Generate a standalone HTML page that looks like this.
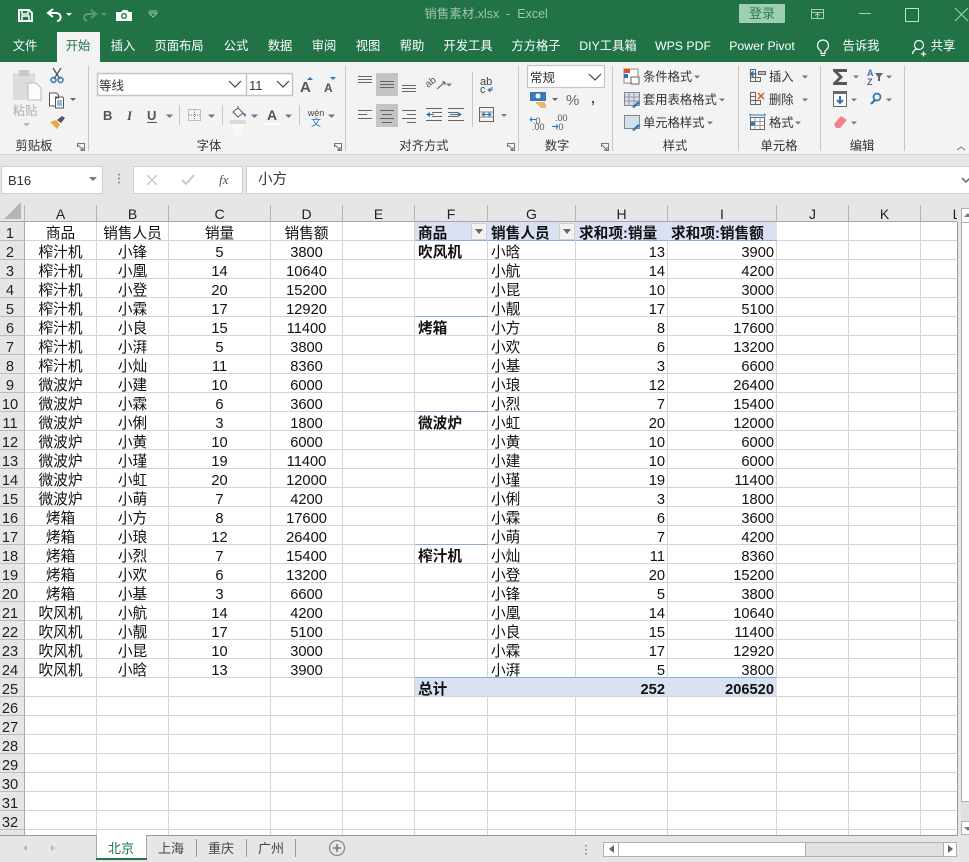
<!DOCTYPE html>
<html lang="zh"><head><meta charset="utf-8"><title>销售素材.xlsx - Excel</title>
<style>
html,body{margin:0;padding:0;width:969px;height:862px;overflow:hidden;background:#e6e6e6;font-family:"Liberation Sans","Noto Sans CJK SC",sans-serif}
svg{position:absolute;left:0;top:0}
svg text{font-family:"Liberation Sans","Noto Sans CJK SC",sans-serif}
#grid{position:absolute;left:0;top:205px;width:957px;height:630px;overflow:hidden;background:#fff}
table{border-collapse:separate;border-spacing:0;table-layout:fixed;width:993px;font-size:14.67px;color:#111}
td,th{box-sizing:border-box;height:19px;padding:6px 0 0 0;border-right:1px solid #d4d4d4;border-bottom:1px solid #d4d4d4;text-align:center;font-weight:400;white-space:nowrap;overflow:hidden;line-height:12px}
tr.h td{height:17px;padding-top:2px;padding-right:0;background:#e6e6e6;border-right:1px solid #b4b4b4;border-bottom:1px solid #a6a6a6;color:#222;font-size:14px;line-height:14px}
td:first-child{background:#e6e6e6;border-right:1px solid #a8a8a8;border-bottom:1px solid #bbb;color:#222;font-size:14.67px;padding-right:4px}
td.l{text-align:left;padding-left:3px}
td.b{font-weight:700;text-align:left;padding-left:3px}
td.r{text-align:right;padding-right:2px}
tr.ph td.p{background:#d9e1f2;border-right-color:#d9e1f2;border-bottom:1px solid #8ea9db;font-weight:700;text-align:left;padding-left:3px;color:#111;position:relative}
tr.t td.p{background:#d9e1f2;border-right-color:#d9e1f2;border-bottom-color:#d4d4d4;font-weight:700}
td.tb{border-bottom-color:#8ea9db}
td.gb{border-bottom-color:#8ea9db}
.f{position:absolute;right:0;top:1px;width:16px;height:17px;background:#f2f2f2;border:1px solid #d0d0d0;box-sizing:border-box}
.f:after{content:"";position:absolute;left:3px;top:5px;border:4px solid transparent;border-top:5px solid #666;border-bottom:0}
</style></head><body>
<svg width="969" height="205" viewBox="0 0 969 205">
<rect width="969" height="62" fill="#217346"/>
<rect y="62" width="969" height="93" fill="#f3f3f3"/>
<rect y="154" width="969" height="1" fill="#d2d2d2"/>
<rect y="155" width="969" height="50" fill="#e6e6e6"/>

<!-- QAT -->
<g fill="none" stroke="#fff" stroke-width="2"><path d="M19 10h10l3 3v8H19z"/><path d="M22 10v4h6v-4M22 21v-5h7v5" stroke-width="1.5"/></g>
<path d="M53 9l-5 4 5 4M48 13h8c6 0 6 8 1 8" fill="none" stroke="#fff" stroke-width="2"/>
<path d="M66 13h6l-3 3z" fill="#fff"/>
<path d="M91 10l5 4-5 4M96 14h-8c-5 0-5 6-1 7" fill="none" stroke="#5a9a77" stroke-width="2"/>
<path d="M101 13h6l-3 3z" fill="#5a9a77"/>
<path d="M116 12h5l2-2h4l2 2h3v9h-16z" fill="#fff"/><circle cx="124" cy="16" r="3" fill="#217346"/><circle cx="124" cy="16" r="1.6" fill="#fff"/>
<path d="M149 11h8M149 13h8l-4 4z" fill="none" stroke="#9cc4ad" stroke-width="1"/>
<text x="486" y="18" font-size="12.5" fill="#9fc5b0" text-anchor="middle">销售素材.xlsx&#160;&#160;-&#160;&#160;Excel</text>
<rect x="739" y="4" width="46" height="19" rx="1" fill="#9fcfb2"/>
<text x="762" y="18" font-size="13" fill="#2f7c52" text-anchor="middle">登录</text>
<g fill="none" stroke="#a9cdb8"><rect x="811.5" y="9.5" width="12" height="9"/><path d="M811 12.5h13M817.5 18v-4M815 15.5l2.5-2 2.5 2"/>
<path d="M859 13.5h12"/><rect x="905.5" y="8.5" width="13" height="13" stroke="#c3dccd"/><path d="M955 8l13 13M968 8l-13 13"/></g>

<!-- tabs -->
<rect x="57" y="32" width="43" height="30" fill="#f3f3f3"/>
<g font-size="12.3" fill="#fff" text-anchor="middle">
<text x="25" y="50">文件</text>
<text x="78" y="50" fill="#217346">开始</text>
<text x="123" y="50">插入</text>
<text x="179" y="50">页面布局</text>
<text x="236" y="50">公式</text>
<text x="280" y="50">数据</text>
<text x="324" y="50">审阅</text>
<text x="368" y="50">视图</text>
<text x="412" y="50">帮助</text>
<text x="468" y="50">开发工具</text>
<text x="536" y="50">方方格子</text>
<text x="608" y="50">DIY工具箱</text>
<text x="683" y="50">WPS PDF</text>
<text x="762" y="50">Power Pivot</text>
<text x="861" y="50">告诉我</text>
<text x="943" y="50">共享</text>
</g>
<path d="M821 51v2.5h4V51c3-2 3.500-3.500 3.500-5.500a5.500 5.500 0 0 0-11 0c0 2 .5 3.500 3.500 5.500z" fill="none" stroke="#fff" stroke-width="1.200"/><path d="M821 55.500h4" stroke="#fff"/>
<circle cx="919" cy="45" r="4.500" fill="none" stroke="#fff" stroke-width="1.200"/><path d="M912.500 54c.5-3.500 3-5 5-5M921 54h5M923.500 51.500v5" fill="none" stroke="#fff" stroke-width="1.200"/>

<!-- separators -->
<g fill="#c6c6c6"><rect x="88" y="66" width="1" height="85"/><rect x="345" y="66" width="1" height="85"/><rect x="518" y="66" width="1" height="85"/><rect x="612" y="66" width="1" height="85"/><rect x="738" y="66" width="1" height="85"/><rect x="820" y="66" width="1" height="85"/><rect x="904" y="66" width="1" height="85"/>
<rect x="179" y="105" width="1" height="20"/><rect x="222" y="105" width="1" height="20"/><rect x="299" y="105" width="1" height="20"/><rect x="472" y="72" width="1" height="55"/></g>

<!-- clipboard -->
<rect x="13" y="73" width="22" height="27" fill="#dcdcdc"/><rect x="19" y="70" width="10" height="6" fill="#c8c8c8"/>
<path d="M28 83h8l5 5v12H28z" fill="#fbfbfb" stroke="#bbb"/>
<text x="25" y="115" font-size="12.500" fill="#b0b0b0" text-anchor="middle">粘贴</text>
<path d="M23 123h7l-3.500 3.500z" fill="#b8b8b8"/>
<path d="M53 68l7 11M61 68l-7 11" stroke="#555" stroke-width="1.300" fill="none"/><circle cx="53.500" cy="80" r="2.500" fill="none" stroke="#2e75b5" stroke-width="1.500"/><circle cx="60.500" cy="80" r="2.500" fill="none" stroke="#2e75b5" stroke-width="1.500"/>
<path d="M49.500 93h7l2 2v3h-3v8h-6zM55.500 97h7l1 1v10h-8z" fill="#fff" stroke="#555" stroke-width="1"/><path d="M57 101h5M57 103h5M57 105h5" stroke="#2e75b5"/>
<path d="M70 98h6l-3 3z" fill="#666"/>
<path d="M50 122l6-2 4 5-3 4z" fill="#e8a948"/><path d="M57 120l5-4 3 2-4 5z" fill="#555"/>
<g font-size="12.300" fill="#333" text-anchor="middle"><text x="34" y="150">剪贴板</text><text x="209" y="150">字体</text><text x="424" y="150">对齐方式</text><text x="557" y="150">数字</text><text x="675" y="150">样式</text><text x="779" y="150">单元格</text><text x="862" y="150">编辑</text></g>
<g fill="none" stroke="#777"><path d="M77.500 147v-3.500h7v7H81M78 145l5 5M83 147v3h-3"/><path d="M334.500 147v-3.500h7v7H338M335 145l5 5M340 147v3h-3"/><path d="M507.500 147v-3.500h7v7H511M508 145l5 5M513 147v3h-3"/><path d="M601.500 147v-3.500h7v7H605M602 145l5 5M607 147v3h-3"/></g>

<!-- font -->
<rect x="97.500" y="73.500" width="195" height="22" fill="#fff" stroke="#c4c4c4" stroke-width="1.500"/><path d="M246.500 74v21" stroke="#c4c4c4" stroke-width="1.500"/>
<text x="99" y="90" font-size="12.500" fill="#333">等线</text><text x="249" y="90" font-size="13" fill="#333">11</text>
<path d="M229 81l6 6 6-6M277 81l6 6 6-6" fill="none" stroke="#444" stroke-width="1.200"/>
<text x="300" y="92" font-size="15" font-weight="700" fill="#555">A</text><path d="M307 80h6l-3-3z" fill="#2e75b5"/>
<text x="324" y="92" font-size="12" font-weight="700" fill="#555">A</text><path d="M330 77h6l-3 3z" fill="#2e75b5"/>
<text x="103" y="120" font-size="13" font-weight="700" fill="#555">B</text>
<text x="127" y="120" font-size="13" font-weight="700" font-style="italic" fill="#555" style="font-family:'Liberation Serif'">I</text>
<text x="147" y="120" font-size="13" font-weight="700" fill="#555">U</text><path d="M147 122.500h10" stroke="#555"/>
<path d="M166 114.500h7l-3.500 3.500zM208 114.500h7l-3.500 3.500zM251 114.500h7l-3.500 3.500zM285 114.500h7l-3.500 3.500zM328 114.500h7l-3.500 3.500z" fill="#777"/>
<rect x="188.500" y="109.500" width="12" height="11" fill="none" stroke="#888" stroke-dasharray="1 1"/><path d="M194.500 110v10M189 115h11" stroke="#888" stroke-dasharray="1 1"/>
<path d="M233 112l5-4 5 5-5 4zM238 108v-2" fill="#fff" stroke="#555"/><path d="M243 113c2 0 3 1 3 2s-1 2-2 1z" fill="#2e75b5"/>
<rect x="230" y="120" width="16" height="4" fill="#d8dbd8"/><path d="M232 124h12l-4 12h-4z" fill="#f9f9f9"/>
<text x="267" y="120" font-size="14" font-weight="700" fill="#555">A</text><rect x="265" y="123" width="14" height="2" fill="#fff"/>
<text x="316" y="116" font-size="9" fill="#444" text-anchor="middle">wén</text><text x="316" y="126" font-size="10" fill="#2e75b5" text-anchor="middle">文</text>

<!-- alignment -->
<rect x="376" y="73" width="22" height="23" fill="#c4c4c4"/><rect x="376" y="104" width="22" height="23" fill="#c4c4c4"/>
<g stroke="#666" fill="none"><path d="M358 76.500h14M358 79.500h14M358 82.500h14"/><path d="M380 81.500h14M380 84.500h14M380 87.500h14"/><path d="M402 85.500h14M402 88.500h14M402 91.500h14"/>
<path d="M358 110.500h14M358 114.500h9M358 118.500h14"/><path d="M380 110.500h14M382 114.500h10M380 118.500h14M382 122.500h10"/><path d="M402 110.500h14M407 114.500h9M402 118.500h14M407 122.500h9"/>
<path d="M426 108.500h16M432 112.500h10M432 116.500h10M426 120.500h16"/><path d="M448 108.500h16M448 112.500h10M448 116.500h10M448 120.500h16"/></g>
<path d="M426 114.500l4-2.500v5zM430 114h4v1h-4z" fill="#2e75b5"/><path d="M462 114.500l-4-2.500v5zM450 114h8v1h-8z" fill="#2e75b5"/>
<text x="0" y="0" font-size="10" fill="#555" transform="translate(428 88) rotate(-38)">ab</text><path d="M437 89l8-7M445 82h-3M445 82v3" fill="none" stroke="#555"/>
<path d="M446 83.500h6l-3 3z" fill="#777"/>
<text x="480" y="85" font-size="11" fill="#444">ab</text><text x="480" y="93" font-size="11" fill="#444">c</text><path d="M488 90h4v-3M488 90l2-1.500v3z" stroke="#2e75b5" fill="none"/>
<rect x="479.500" y="107.500" width="14" height="14" fill="none" stroke="#666"/><path d="M480 112h13M480 117h13" stroke="#888"/><path d="M482 114.500h9M482 114.500l2-1.500v3zM491 114.500l-2-1.500v3z" stroke="#2e75b5" fill="#2e75b5"/>
<path d="M501 114h6l-3 3z" fill="#777"/>

<!-- number -->
<rect x="527.500" y="65.500" width="77" height="22" fill="#fff" stroke="#c4c4c4" stroke-width="1.200"/>
<text x="530" y="82" font-size="12.500" fill="#333">常规</text><path d="M589 74l6 6 6-6" fill="none" stroke="#444" stroke-width="1.200"/>
<rect x="530" y="92" width="16" height="9" fill="#3a78b8"/><circle cx="538" cy="96" r="2.500" fill="#fff"/><path d="M536 103h9M538 105h8M540 107h6" stroke="#e6a53a" stroke-width="1.500"/>
<path d="M552 98h6l-3 3z" fill="#666"/>
<text x="566" y="105" font-size="15" fill="#666">%</text><text x="591" y="103" font-size="14" font-weight="700" fill="#555">,</text>
<text x="533" y="124" font-size="9" fill="#555">.0</text><text x="532" y="130" font-size="9" fill="#555">.00</text><path d="M530 119.500h6M530 119.500l2-2M530 119.500l2 2" stroke="#2e75b5" fill="none"/>
<text x="555" y="121" font-size="9" fill="#555">.00</text><text x="556" y="130" font-size="9" fill="#555">.0</text><path d="M552 126.500h6M558 126.500l-2-2M558 126.500l-2 2" stroke="#2e75b5" fill="none"/>

<!-- styles -->
<g font-size="12.300" fill="#333"><text x="643" y="81">条件格式</text><text x="643" y="104">套用表格格式</text><text x="643" y="127">单元格样式</text>
<text x="769" y="81">插入</text><text x="769" y="104">删除</text><text x="769" y="127">格式</text></g>
<path d="M694 75.500h6l-3 3zM719 98.500h6l-3 3zM707 121.500h6l-3 3zM802 75.500h6l-3 3zM802 98.500h6l-3 3zM795 121.500h6l-3 3zM853 75.500h6l-3 3zM886 75.500h6l-3 3zM851 98.500h6l-3 3zM886 98.500h6l-3 3zM851 121.500h6l-3 3z" fill="#777"/>
<rect x="624" y="69" width="14" height="14" fill="#fff" stroke="#888"/><rect x="624" y="69" width="6" height="4" fill="#d9542b"/><rect x="624" y="74" width="4" height="4" fill="#2e75b5"/><rect x="631" y="77" width="8" height="7" fill="#fff" stroke="#666"/>
<rect x="624.500" y="92.500" width="15" height="13" fill="#d4e0ee" stroke="#888"/><path d="M629 93v12M634 93v12M625 97h14M625 101h14" stroke="#999"/><path d="M632 107l6-6 2 2-6 5z" fill="#3678b8"/>
<rect x="624.500" y="115.500" width="15" height="13" fill="#d4e0ee" stroke="#888"/><path d="M632 130l6-6 2 2-6 5z" fill="#3678b8"/>

<!-- cells -->
<g fill="none" stroke="#666"><rect x="750.500" y="69.500" width="5" height="4"/><rect x="750.500" y="73.500" width="5" height="4"/><rect x="750.500" y="77.500" width="5" height="4"/><rect x="755.500" y="77.500" width="5" height="4"/><rect x="758.500" y="71.500" width="7" height="3" fill="#bbb"/></g>
<path d="M750 74h7M750 74l3-2.500v5z" stroke="#2e75b5" fill="#2e75b5"/>
<g fill="none" stroke="#666"><rect x="750.500" y="92.500" width="5" height="4"/><rect x="750.500" y="96.500" width="5" height="4"/><rect x="750.500" y="100.500" width="5" height="4"/><rect x="755.500" y="100.500" width="5" height="4"/></g>
<path d="M758 93l6 6M764 93l-6 6" stroke="#d9542b" stroke-width="1.500"/>
<rect x="750.500" y="117.500" width="14" height="12" fill="#fff" stroke="#666"/><path d="M755 118v11M760 118v11M751 121.500h13M751 125.500h13" stroke="#999"/><rect x="751" y="122" width="4" height="3.500" fill="#2e75b5"/><path d="M750 115h15M750 113.500v3M765 113.500v3" stroke="#2e75b5"/>

<!-- edit -->
<path d="M833 69h14v3h-9l5 5-5 5h9v3h-14v-2l6-6-6-6z" fill="#555"/>
<text x="867" y="76" font-size="9" font-weight="700" fill="#2e75b5">A</text><text x="867" y="85" font-size="9" font-weight="700" fill="#7b4fa6">Z</text><path d="M875 73h8l-3 4v4h-2v-4z" fill="#666"/>
<rect x="833.500" y="91.500" width="13" height="15" fill="#fff" stroke="#666"/><rect x="833" y="91" width="14" height="3" fill="#666"/><path d="M840 96v7M837 100l3 3 3-3" stroke="#2e75b5" stroke-width="2" fill="none"/>
<circle cx="877" cy="97" r="3.500" fill="none" stroke="#2e75b5" stroke-width="1.700"/><path d="M875 100l-4 4" stroke="#2e75b5" stroke-width="2.200"/>
<path d="M834 124l7-8 6 4-7 8h-4z" fill="#f1808d"/>
<path d="M957 150l4-3 4 3" fill="none" stroke="#777"/>

<!-- formula bar -->
<rect x="1.500" y="166.500" width="101" height="27" fill="#fff" stroke="#cfcfcf"/>
<text x="8" y="185" font-size="13" fill="#333">B16</text><path d="M89 177h8l-4 4z" fill="#777"/>
<path d="M118 174.500h2M118 178.500h2M118 182.500h2" stroke="#999" stroke-width="2"/>
<rect x="133.500" y="166.500" width="109" height="27" fill="#fff" stroke="#cfcfcf"/>
<rect x="246.500" y="166.500" width="726" height="27" fill="#fff" stroke="#cfcfcf"/>
<path d="M147 175l10 10M157 175l-10 10" stroke="#c9c9c9" stroke-width="1.500"/>
<path d="M182 180l4 4 8-9" stroke="#c9c9c9" stroke-width="2" fill="none"/>
<text x="219" y="184" font-size="13" font-style="italic" fill="#555" style="font-family:'Liberation Serif'">fx</text>
<text x="258" y="184" font-size="14.500" fill="#333">小方</text>
<path d="M962 178l4 4 4-4" fill="none" stroke="#666" stroke-width="1.500"/>
</svg>

<div id="grid"><table>
<colgroup><col style="width:25px"><col style="width:72px"><col style="width:72px"><col style="width:102px"><col style="width:72px"><col style="width:72px"><col style="width:73px"><col style="width:88px"><col style="width:92px"><col style="width:109px"><col style="width:72px"><col style="width:72px"><col style="width:72px"></colgroup>
<tr class="h"><td></td><td>A</td><td>B</td><td>C</td><td>D</td><td>E</td><td>F</td><td>G</td><td>H</td><td>I</td><td>J</td><td>K</td><td>L</td></tr>
<tr class="ph"><td>1</td><td>商品</td><td>销售人员</td><td>销量</td><td>销售额</td><td></td><td class="p">商品<i class="f"></i></td><td class="p">销售人员<i class="f"></i></td><td class="p">求和项:销量</td><td class="p">求和项:销售额</td><td></td><td></td><td></td></tr>
<tr><td>2</td><td>榨汁机</td><td>小锋</td><td>5</td><td>3800</td><td></td><td class="b">吹风机</td><td class="l">小晗</td><td class="r">13</td><td class="r">3900</td><td></td><td></td><td></td></tr>
<tr><td>3</td><td>榨汁机</td><td>小凰</td><td>14</td><td>10640</td><td></td><td></td><td class="l">小航</td><td class="r">14</td><td class="r">4200</td><td></td><td></td><td></td></tr>
<tr><td>4</td><td>榨汁机</td><td>小登</td><td>20</td><td>15200</td><td></td><td></td><td class="l">小昆</td><td class="r">10</td><td class="r">3000</td><td></td><td></td><td></td></tr>
<tr><td>5</td><td>榨汁机</td><td>小霖</td><td>17</td><td>12920</td><td></td><td class="gb"></td><td class="l">小靓</td><td class="r">17</td><td class="r">5100</td><td></td><td></td><td></td></tr>
<tr><td>6</td><td>榨汁机</td><td>小良</td><td>15</td><td>11400</td><td></td><td class="b">烤箱</td><td class="l">小方</td><td class="r">8</td><td class="r">17600</td><td></td><td></td><td></td></tr>
<tr><td>7</td><td>榨汁机</td><td>小湃</td><td>5</td><td>3800</td><td></td><td></td><td class="l">小欢</td><td class="r">6</td><td class="r">13200</td><td></td><td></td><td></td></tr>
<tr><td>8</td><td>榨汁机</td><td>小灿</td><td>11</td><td>8360</td><td></td><td></td><td class="l">小基</td><td class="r">3</td><td class="r">6600</td><td></td><td></td><td></td></tr>
<tr><td>9</td><td>微波炉</td><td>小建</td><td>10</td><td>6000</td><td></td><td></td><td class="l">小琅</td><td class="r">12</td><td class="r">26400</td><td></td><td></td><td></td></tr>
<tr><td>10</td><td>微波炉</td><td>小霖</td><td>6</td><td>3600</td><td></td><td class="gb"></td><td class="l">小烈</td><td class="r">7</td><td class="r">15400</td><td></td><td></td><td></td></tr>
<tr><td>11</td><td>微波炉</td><td>小俐</td><td>3</td><td>1800</td><td></td><td class="b">微波炉</td><td class="l">小虹</td><td class="r">20</td><td class="r">12000</td><td></td><td></td><td></td></tr>
<tr><td>12</td><td>微波炉</td><td>小黄</td><td>10</td><td>6000</td><td></td><td></td><td class="l">小黄</td><td class="r">10</td><td class="r">6000</td><td></td><td></td><td></td></tr>
<tr><td>13</td><td>微波炉</td><td>小瑾</td><td>19</td><td>11400</td><td></td><td></td><td class="l">小建</td><td class="r">10</td><td class="r">6000</td><td></td><td></td><td></td></tr>
<tr><td>14</td><td>微波炉</td><td>小虹</td><td>20</td><td>12000</td><td></td><td></td><td class="l">小瑾</td><td class="r">19</td><td class="r">11400</td><td></td><td></td><td></td></tr>
<tr><td>15</td><td>微波炉</td><td>小萌</td><td>7</td><td>4200</td><td></td><td></td><td class="l">小俐</td><td class="r">3</td><td class="r">1800</td><td></td><td></td><td></td></tr>
<tr><td>16</td><td>烤箱</td><td>小方</td><td>8</td><td>17600</td><td></td><td></td><td class="l">小霖</td><td class="r">6</td><td class="r">3600</td><td></td><td></td><td></td></tr>
<tr><td>17</td><td>烤箱</td><td>小琅</td><td>12</td><td>26400</td><td></td><td class="gb"></td><td class="l">小萌</td><td class="r">7</td><td class="r">4200</td><td></td><td></td><td></td></tr>
<tr><td>18</td><td>烤箱</td><td>小烈</td><td>7</td><td>15400</td><td></td><td class="b">榨汁机</td><td class="l">小灿</td><td class="r">11</td><td class="r">8360</td><td></td><td></td><td></td></tr>
<tr><td>19</td><td>烤箱</td><td>小欢</td><td>6</td><td>13200</td><td></td><td></td><td class="l">小登</td><td class="r">20</td><td class="r">15200</td><td></td><td></td><td></td></tr>
<tr><td>20</td><td>烤箱</td><td>小基</td><td>3</td><td>6600</td><td></td><td></td><td class="l">小锋</td><td class="r">5</td><td class="r">3800</td><td></td><td></td><td></td></tr>
<tr><td>21</td><td>吹风机</td><td>小航</td><td>14</td><td>4200</td><td></td><td></td><td class="l">小凰</td><td class="r">14</td><td class="r">10640</td><td></td><td></td><td></td></tr>
<tr><td>22</td><td>吹风机</td><td>小靓</td><td>17</td><td>5100</td><td></td><td></td><td class="l">小良</td><td class="r">15</td><td class="r">11400</td><td></td><td></td><td></td></tr>
<tr><td>23</td><td>吹风机</td><td>小昆</td><td>10</td><td>3000</td><td></td><td></td><td class="l">小霖</td><td class="r">17</td><td class="r">12920</td><td></td><td></td><td></td></tr>
<tr><td>24</td><td>吹风机</td><td>小晗</td><td>13</td><td>3900</td><td></td><td class="tb"></td><td class="l tb">小湃</td><td class="r tb">5</td><td class="r tb">3800</td><td></td><td></td><td></td></tr>
<tr class="t"><td>25</td><td></td><td></td><td></td><td></td><td></td><td class="p l">总计</td><td class="p"></td><td class="p r">252</td><td class="p r">206520</td><td></td><td></td><td></td></tr>
<tr><td>26</td><td></td><td></td><td></td><td></td><td></td><td></td><td></td><td></td><td></td><td></td><td></td><td></td></tr>
<tr><td>27</td><td></td><td></td><td></td><td></td><td></td><td></td><td></td><td></td><td></td><td></td><td></td><td></td></tr>
<tr><td>28</td><td></td><td></td><td></td><td></td><td></td><td></td><td></td><td></td><td></td><td></td><td></td><td></td></tr>
<tr><td>29</td><td></td><td></td><td></td><td></td><td></td><td></td><td></td><td></td><td></td><td></td><td></td><td></td></tr>
<tr><td>30</td><td></td><td></td><td></td><td></td><td></td><td></td><td></td><td></td><td></td><td></td><td></td><td></td></tr>
<tr><td>31</td><td></td><td></td><td></td><td></td><td></td><td></td><td></td><td></td><td></td><td></td><td></td><td></td></tr>
<tr><td>32</td><td></td><td></td><td></td><td></td><td></td><td></td><td></td><td></td><td></td><td></td><td></td><td></td></tr>
<tr><td></td><td></td><td></td><td></td><td></td><td></td><td></td><td></td><td></td><td></td><td></td><td></td><td></td></tr>
</table></div>

<svg width="969" height="862" viewBox="0 0 969 862" style="pointer-events:none">
<path d="M4 219h17v-17z" fill="#b5b5b5"/>
<rect x="957" y="222" width="1" height="613" fill="#9a9a9a"/>
<rect x="0" y="835" width="969" height="27" fill="#e6e6e6"/>
<rect x="0" y="835" width="958" height="1" fill="#9a9a9a"/>
<!-- v scrollbar -->
<rect x="961.500" y="208.500" width="9" height="14" fill="#fff" stroke="#b0b0b0"/><path d="M964 217l4-4 3 4z" fill="#777"/>
<rect x="961.500" y="222.500" width="9" height="579" fill="#fff" stroke="#b0b0b0"/>
<rect x="961" y="802" width="9" height="19" fill="#dfe1df"/>
<rect x="961.500" y="821.500" width="9" height="13" fill="#fff" stroke="#b0b0b0"/><path d="M964 827l4 4 3-4z" fill="#777"/>
<!-- tabs -->
<rect x="96" y="835" width="50" height="25" fill="#fff"/><rect x="96" y="835" width="1" height="25" fill="#a8a8a8"/><rect x="146" y="835" width="1" height="25" fill="#a8a8a8"/>
<rect x="96" y="858" width="51" height="2" fill="#217346"/>
<g font-size="13" text-anchor="middle" fill="#444"><text x="121" y="853" fill="#217346">北京</text><text x="171" y="853">上海</text><text x="221" y="853">重庆</text><text x="271" y="853">广州</text></g>
<path d="M196.500 839v18M246.500 839v18M295.500 839v18" stroke="#9a9a9a"/>
<circle cx="337" cy="848" r="7.500" fill="none" stroke="#8a8a8a" stroke-width="1.300"/><path d="M337 844v8M333 848h8" stroke="#777" stroke-width="1.500"/>
<path d="M27 845v6l-4-3zM51 845v6l4-3z" fill="#bcbcbc"/>
<path d="M586 845v1.500M586 849v1.500M586 853v1.500" stroke="#999" stroke-width="2"/>
<!-- h scrollbar -->
<rect x="603.500" y="842.500" width="353" height="14" fill="#dfe1df" stroke="#b0b0b0"/>
<rect x="603.500" y="842.500" width="15" height="14" fill="#fff" stroke="#b0b0b0"/><path d="M614 845v8l-5-4z" fill="#666"/>
<rect x="618.500" y="842.500" width="187" height="14" fill="#fff" stroke="#b0b0b0"/>
<rect x="943.500" y="842.500" width="13" height="14" fill="#fff" stroke="#b0b0b0"/><path d="M948 845v8l5-4z" fill="#666"/>
</svg>
</body></html>
